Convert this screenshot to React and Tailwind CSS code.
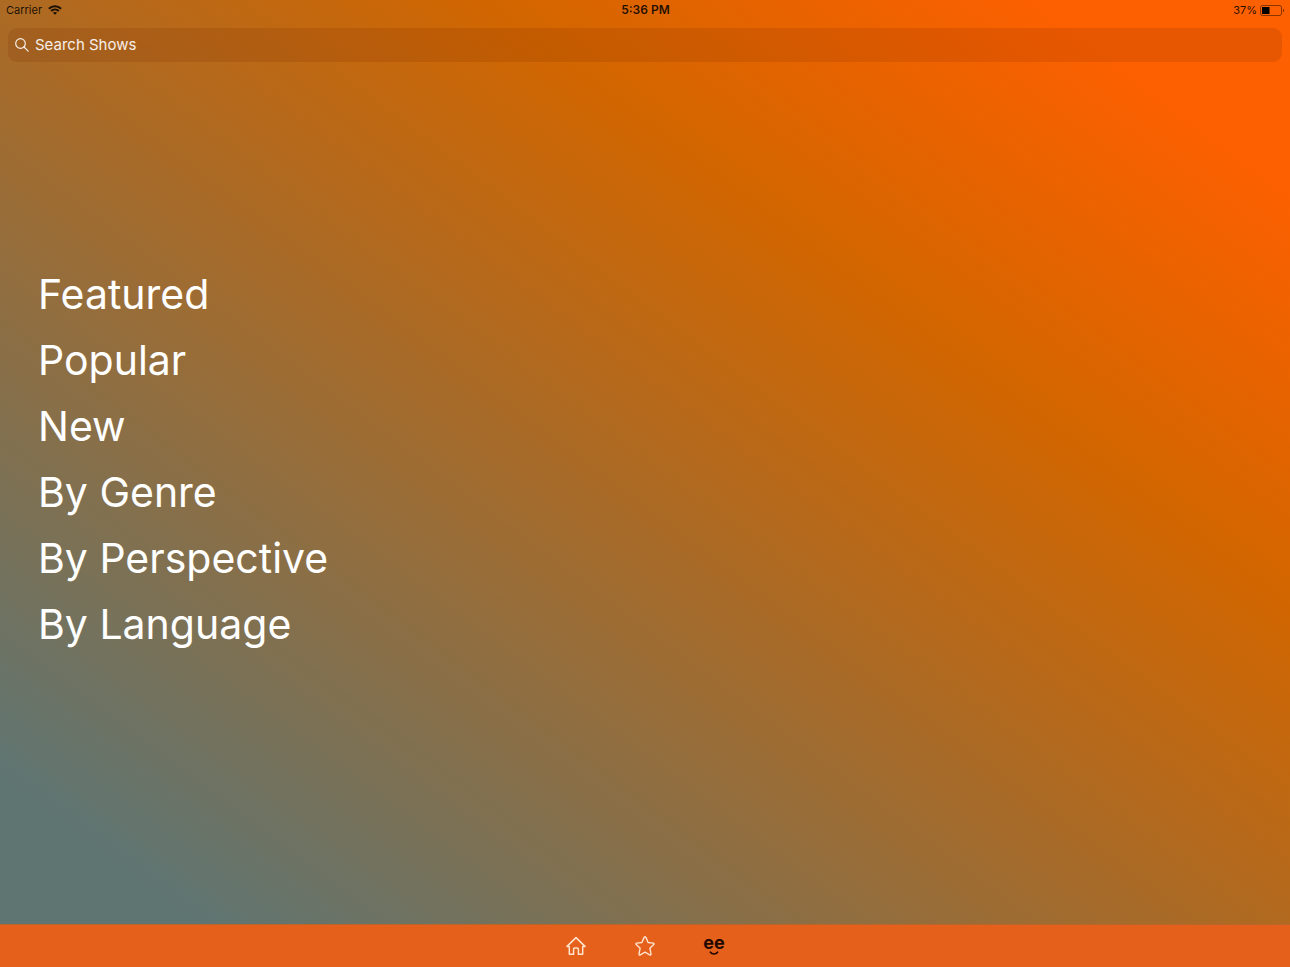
const categories = ["Featured", "Popular", "New", "By Genre", "By Perspective", "By Language"];

function WifiIcon() {
  return (
    <svg viewBox="0 0 14 10" className="h-[10px] w-[14px]" fill="none" stroke="currentColor" aria-hidden="true">
      <path d="M0.9 3.7C4.3 0.4 9.7 0.4 13.1 3.7" strokeWidth="2" />
      <path d="M3.1 6C5.3 3.9 8.7 3.9 10.9 6" strokeWidth="1.9" />
      <path d="M7 9.8L4.9 7.7C6.1 6.6 7.9 6.6 9.1 7.7Z" fill="currentColor" stroke="none" />
    </svg>
  );
}

function BatteryIcon() {
  return (
    <svg viewBox="0 0 25 11" className="h-[11px] w-[25px]" fill="none" aria-hidden="true">
      <rect x="0.5" y="0.5" width="21" height="10" rx="2" stroke="#000" strokeOpacity="0.45" />
      <rect x="2" y="2" width="7.5" height="7" fill="#000" />
      <path d="M23 3.7C24.5 4.4 24.5 6.6 23 7.3Z" fill="#000" fillOpacity="0.5" />
    </svg>
  );
}

function SearchIcon() {
  return (
    <svg viewBox="0 0 14 14" className="h-[14px] w-[14px] shrink-0" fill="none" stroke="currentColor" strokeWidth="1.2" strokeLinecap="round" aria-hidden="true">
      <circle cx="5.5" cy="5.5" r="4.8" />
      <path d="M9 9L13.2 13.2" />
    </svg>
  );
}

function HomeIcon() {
  return (
    <svg viewBox="0 0 20 20" className="h-5 w-5" fill="none" stroke="currentColor" strokeWidth="1.5" strokeLinejoin="round" aria-hidden="true">
      <path d="M10 1.6L19 10.4H16.7V18.3H12.4V13.2C12.4 12.5 12 12.1 11.3 12.1H8.7C8 12.1 7.6 12.5 7.6 13.2V18.3H3.3V10.4H1Z" />
    </svg>
  );
}

function StarIcon() {
  return (
    <svg viewBox="0 0 20 20" className="h-5 w-5" fill="none" stroke="currentColor" strokeWidth="1.4" strokeLinejoin="round" aria-hidden="true">
      <path d="M9.1 1.4Q10 0.1 10.9 1.4L13.1 6.5L18.2 7.1Q19.7 7.4 18.7 8.6L14.9 12.3L16 17.8Q16.1 19.5 14.7 18.8L10 16.2L5.3 18.8Q3.9 19.5 4 17.8L5.1 12.3L1.3 8.6Q0.3 7.4 1.8 7.1L6.9 6.5Z" />
    </svg>
  );
}

function FaceLogo() {
  return (
    <svg viewBox="0 0 28 30" className="h-[30px] w-7" aria-hidden="true">
      <text x="14" y="18" textAnchor="middle" fontSize="18" fontWeight="700" fill="currentColor" className="font-['Inter',sans-serif]">ee</text>
      <path d="M10.4 21.2C12 23.6 16 23.6 17.6 21.2" fill="none" stroke="currentColor" strokeWidth="1.6" strokeLinecap="round" />
    </svg>
  );
}

export default function App() {
  return (
    <div className="flex min-h-screen flex-col bg-[linear-gradient(to_top_right,#5f7572_10%,#ad6a23_50%,#d26600_69%,#fc6000_90%)] font-['Inter',sans-serif]">
      <header className="grid h-5 grid-cols-3 items-center pr-[5px] pl-[6px] text-[11px] text-black/85">
        <div className="flex items-center gap-[6px]">
          <span>Carrier</span>
          <WifiIcon />
        </div>
        <time className="text-center text-[12px] font-semibold">5:36 PM</time>
        <div className="flex items-center justify-end gap-[3px]">
          <span>37%</span>
          <BatteryIcon />
        </div>
      </header>

      <label className="mx-2 mt-2 flex h-[34px] items-center gap-[6px] rounded-[9px] bg-[#702000]/15 px-[7px] text-white/90">
        <SearchIcon />
        <input
          type="search"
          aria-label="Search Shows"
          placeholder="Search Shows"
          className="w-full bg-transparent text-[15px] text-white outline-none placeholder:text-white/90"
        />
      </label>

      <main className="flex grow flex-col justify-center px-[38px] pb-[68px]">
        <ul>
          {categories.map((name) => (
            <li key={name}>
              <a href="#" className="block text-[41px] leading-[66px] text-white">{name}</a>
            </li>
          ))}
        </ul>
      </main>

      <nav className="flex h-[43px] items-center justify-center border-t border-[#b8642c] bg-[#e4601b] text-[#ffe3cd]">
        <button type="button" aria-label="Home" className="flex w-[69px] justify-center">
          <HomeIcon />
        </button>
        <button type="button" aria-label="Favorites" className="flex w-[69px] justify-center">
          <StarIcon />
        </button>
        <button type="button" aria-label="Profile" className="flex w-[69px] justify-center text-[#210800]">
          <FaceLogo />
        </button>
      </nav>
    </div>
  );
}
